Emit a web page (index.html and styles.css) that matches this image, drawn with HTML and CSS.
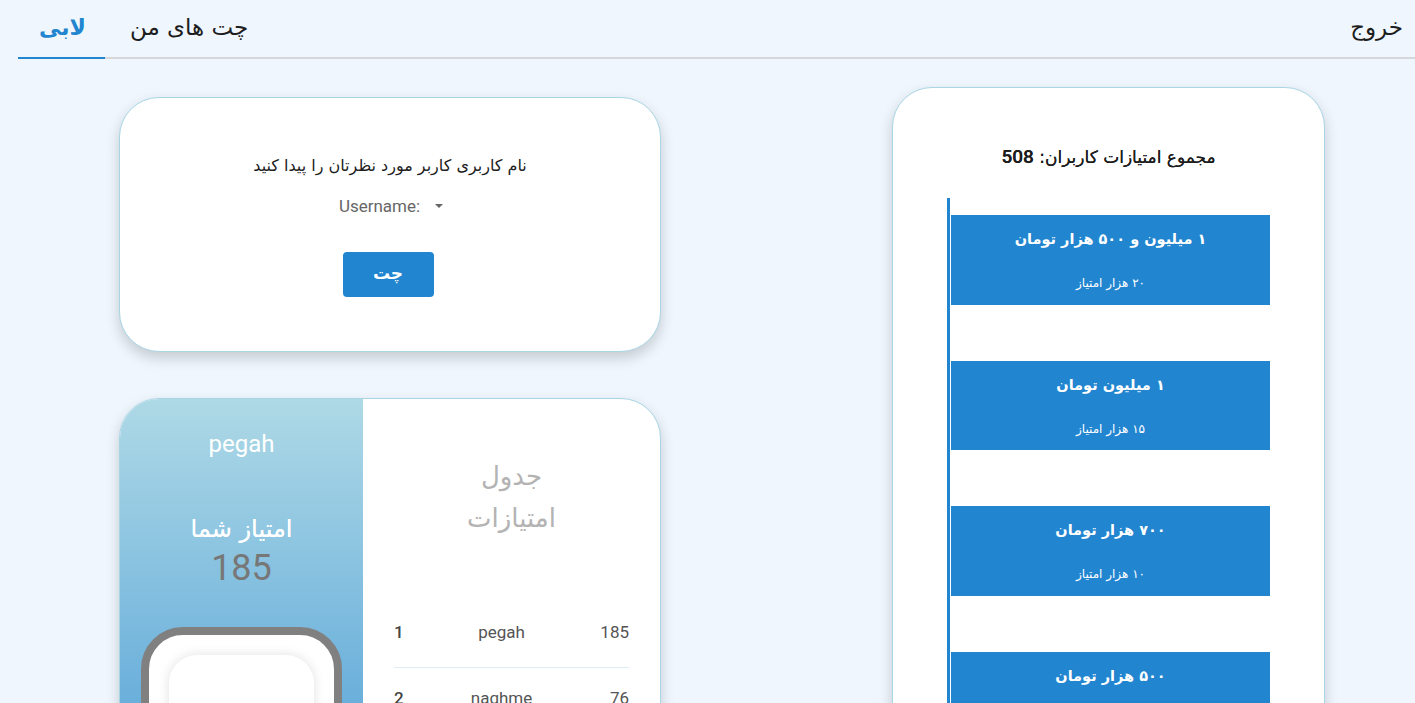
FILE: index.html
```html
<!DOCTYPE html>
<html lang="fa">
<head>
<meta charset="utf-8">
<title>لابی</title>
<link rel="stylesheet" href="styles.css">
</head>
<body>
<nav class="menu">
  <a class="tab active">لابی</a>
  <a class="tab">چت های من</a>
  <a class="tab logout">خروج</a>
</nav>
<main class="main">
  <section class="left-col">
    <div class="card search-card">
      <p class="search-label">نام کاربری کاربر مورد نظرتان را پیدا کنید</p>
      <div class="dropdown"><span class="dd-text">Username:</span><span class="caret"></span></div>
      <button class="chat-btn">چت</button>
    </div>
    <div class="card score-card">
      <div class="profile">
        <div class="p-name">pegah</div>
        <div class="p-label">امتیاز شما</div>
        <div class="p-score">185</div>
        <div class="frame"><div class="frame-inner"></div></div>
      </div>
      <div class="board">
        <h2 class="board-title">جدول<br>امتیازات</h2>
        <div class="row"><span class="rank">1</span><span class="uname">pegah</span><span class="pts">185</span></div>
        <div class="row"><span class="rank">2</span><span class="uname">naghme</span><span class="pts">76</span></div>
        <div class="row"><span class="rank">3</span><span class="uname">ali</span><span class="pts">60</span></div>
      </div>
    </div>
  </section>
  <section class="card prize-card">
    <h2 class="total">مجموع امتیازات کاربران: <span class="num">508</span></h2>
    <div class="timeline">
      <div class="prize"><div class="pz-title">۱ میلیون و ۵۰۰ هزار تومان</div><div class="pz-sub">۲۰ هزار امتیاز</div></div>
      <div class="prize"><div class="pz-title">۱ میلیون تومان</div><div class="pz-sub">۱۵ هزار امتیاز</div></div>
      <div class="prize"><div class="pz-title">۷۰۰ هزار تومان</div><div class="pz-sub">۱۰ هزار امتیاز</div></div>
      <div class="prize"><div class="pz-title">۵۰۰ هزار تومان</div><div class="pz-sub">۵ هزار امتیاز</div></div>
    </div>
  </section>
</main>
</body>
</html>
```
FILE: styles.css
```css
html, body {
  margin: 0;
  padding: 0;
  height: 703px;
  overflow: hidden;
}
body {
  background: #eff6fd;
  font-family: Roboto, "DejaVu Sans", sans-serif;
  color: #222;
}
.tab,
.search-label,
.chat-btn,
.p-label,
.board-title,
.total,
.prize {
  direction: rtl;
}
.menu {
  display: flex;
  margin-left: 18px;
  height: 57px;
  border-bottom: 2px solid #d5d7da;
}
.tab {
  display: flex;
  align-items: center;
  padding: 0 25px 4px;
  font-family: "DejaVu Sans", sans-serif;
  font-size: 23px;
  color: #1d1d1d;
  cursor: pointer;
}
.tab.active {
  color: #2185d0;
  font-weight: bold;
  font-size: 22px;
  border-bottom: 2px solid #2185d0;
  margin-bottom: -2px;
  padding: 0 19px 2px 21px;
}
.tab.logout {
  margin-left: auto;
  padding-right: 12px;
}
.main {
  display: flex;
  align-items: flex-start;
  padding: 28px 0 0 119px;
  gap: 231px;
}
.left-col {
  display: flex;
  flex-direction: column;
  gap: 46px;
  margin-top: 10px;
  width: 542px;
}
.card {
  background: #fff;
  border: 1px solid #a9d6e5;
  box-shadow: 0 6px 14px rgba(0, 0, 0, 0.18);
  box-sizing: border-box;
}
.search-card {
  height: 255px;
  border-radius: 40px;
  display: flex;
  flex-direction: column;
  align-items: center;
  padding-top: 55px;
}
.search-label {
  margin: 0;
  font-family: "DejaVu Sans", sans-serif;
  font-size: 16px;
  line-height: 26px;
  color: #1d1d1d;
}
.dropdown {
  display: flex;
  align-items: center;
  margin-top: 17px;
  margin-left: 2px;
  height: 20px;
}
.dd-text {
  font-size: 17px;
  color: #666;
}
.caret {
  margin-left: 15px;
  width: 0;
  height: 0;
  border-left: 4px solid transparent;
  border-right: 4px solid transparent;
  border-top: 4px solid #666;
}
.chat-btn {
  margin-top: 36px;
  margin-right: 4px;
  width: 91px;
  height: 45px;
  border: none;
  border-radius: 4px;
  background: #2185d0;
  color: #fff;
  font-family: "DejaVu Sans", sans-serif;
  font-weight: bold;
  font-size: 17px;
  padding: 0 0 4px;
}
.score-card {
  height: 420px;
  border-radius: 40px;
  display: flex;
  overflow: hidden;
}
.profile {
  width: 243px;
  flex: none;
  background: linear-gradient(to bottom, #aed9e6 0px, #6aafdb 305px, #3f95d5 600px);
  display: flex;
  flex-direction: column;
  align-items: center;
  padding-top: 30px;
  box-sizing: border-box;
}
.p-name {
  color: #fff;
  font-size: 24px;
  line-height: 30px;
}
.p-label {
  margin-top: 55px;
  color: #fff;
  font-family: "DejaVu Sans", sans-serif;
  font-size: 24px;
  line-height: 30px;
  text-shadow: 0 0 0.5px #fff;
}
.p-score {
  margin-top: 4px;
  color: #777;
  font-size: 36px;
  line-height: 40px;
}
.frame {
  margin-top: 39px;
  width: 201px;
  height: 180px;
  box-sizing: border-box;
  border: 8px solid #808080;
  border-radius: 42px;
  background: #fff;
  display: flex;
  justify-content: center;
  padding-top: 20px;
  flex: none;
}
.frame-inner {
  width: 145px;
  height: 150px;
  border-radius: 28px;
  background: #fff;
  box-shadow: 0 0 12px rgba(0, 0, 0, 0.12);
}
.board {
  flex: 1;
  padding: 56px 31px 0 31px;
}
.board-title {
  margin: 0 0 63px;
  text-align: center;
  font-family: "DejaVu Sans", sans-serif;
  font-weight: normal;
  font-size: 26px;
  line-height: 42px;
  color: #b3b3b3;
}
.row {
  display: flex;
  justify-content: space-between;
  align-items: center;
  padding: 20px 0 25px;
  line-height: 20px;
  border-bottom: 1px solid #dcedf4;
  font-size: 17px;
  color: #555;
}
.rank {
  width: 40px;
  color: #444;
  font-weight: 500;
}
.uname {
  flex: 1;
  text-align: center;
  padding-right: 20px;
}
.pts {
  width: 40px;
  text-align: right;
}
.prize-card {
  width: 433px;
  height: 800px;
  border-radius: 40px;
  padding: 56px 54px 0;
  flex: none;
}
.total {
  margin: 0;
  text-align: center;
  font-family: "DejaVu Sans", sans-serif;
  font-size: 17px;
  font-weight: normal;
  line-height: 26px;
  color: #1d1d1d;
  text-shadow: 0 0 0.6px #1d1d1d;
}
.total .num {
  font-family: Roboto, sans-serif;
  font-size: 19px;
  font-weight: 500;
}
.timeline {
  margin-top: 28px;
  border-left: 3px solid #2185d0;
  padding: 17px 0 0 1px;
  display: flex;
  flex-direction: column;
  gap: 56px;
}
.prize {
  height: 89.5px;
  background: #2285d0;
  color: #fff;
  text-align: center;
  font-family: "DejaVu Sans", sans-serif;
  box-sizing: border-box;
  padding-top: 11px;
}
.pz-title {
  font-size: 14.5px;
  font-weight: bold;
  line-height: 26px;
}
.pz-sub {
  margin-top: 21px;
  font-size: 12px;
  line-height: 20px;
}
```
